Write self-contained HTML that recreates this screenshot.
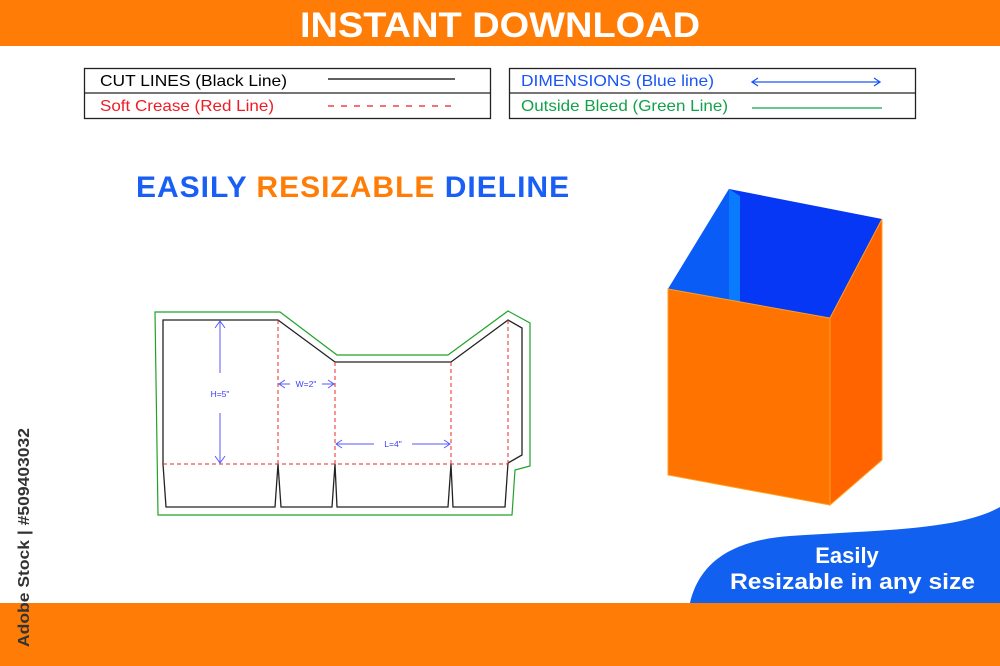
<!DOCTYPE html>
<html><head><meta charset="utf-8"><style>
html,body{margin:0;padding:0;width:1000px;height:666px;overflow:hidden;background:#fff;font-family:"Liberation Sans",sans-serif}
</style></head><body>
<svg width="1000" height="666" viewBox="0 0 1000 666" xmlns="http://www.w3.org/2000/svg" font-family="Liberation Sans, sans-serif">
<rect x="0" y="0" width="1000" height="46" fill="#ff7d06"/>
<text x="300" y="37" font-size="35" font-weight="bold" fill="#fff" textLength="400" lengthAdjust="spacingAndGlyphs">INSTANT DOWNLOAD</text>
<rect x="0" y="603" width="1000" height="63" fill="#ff7d06"/>
<!-- legend -->
<rect x="84.5" y="68.5" width="406" height="50" fill="none" stroke="#222" stroke-width="1.3"/>
<line x1="84" y1="93" x2="491" y2="93" stroke="#222" stroke-width="1.3"/>
<text x="100" y="86" font-size="16" fill="#000" textLength="187" lengthAdjust="spacingAndGlyphs">CUT LINES (Black Line)</text>
<line x1="328" y1="79" x2="455" y2="79" stroke="#000" stroke-width="1.3"/>
<text x="100" y="111" font-size="16" fill="#ee1c25" textLength="174" lengthAdjust="spacingAndGlyphs">Soft Crease (Red Line)</text>
<line x1="328" y1="106" x2="455" y2="106" stroke="#ee1c25" stroke-width="1.3" stroke-dasharray="6 7"/>
<rect x="509.5" y="68.5" width="406" height="50" fill="none" stroke="#222" stroke-width="1.3"/>
<line x1="509" y1="93" x2="916" y2="93" stroke="#222" stroke-width="1.3"/>
<text x="521" y="86" font-size="16" fill="#1a55f5" textLength="193" lengthAdjust="spacingAndGlyphs">DIMENSIONS (Blue line)</text>
<line x1="752" y1="82" x2="880" y2="82" stroke="#1a55f5" stroke-width="1.3"/>
<path d="M758 78 L752 82 L758 86 M874 78 L880 82 L874 86" fill="none" stroke="#1a55f5" stroke-width="1.3"/>
<text x="521" y="111" font-size="16" fill="#12a24a" textLength="207" lengthAdjust="spacingAndGlyphs">Outside Bleed (Green Line)</text>
<line x1="752" y1="108" x2="882" y2="108" stroke="#12a24a" stroke-width="1.3"/>
<!-- heading -->
<text x="136" y="197" font-size="30" font-weight="bold" letter-spacing="1"><tspan fill="#1a5ff5">EASILY </tspan><tspan fill="#ff7d06">RESIZABLE </tspan><tspan fill="#1a5ff5">DIELINE</tspan></text>
<!-- dieline -->
<path d="M155 312 L280 312 L337 355 L448 355 L508 311 L530 323 L530 466 L515 470 L512 515 L158 515 Z" fill="none" stroke="#22a22a" stroke-width="1.2"/>
<path d="M163 320 L278 320 L335 362 L451 362 L508 320 L522 328 L522 455 L508 463 L505 507 L453 507 L451 464 L448 507 L337 507 L335 464 L332 507 L281 507 L278 464 L275 507 L166 507 L163 464 Z" fill="none" stroke="#222" stroke-width="1.3"/>
<g stroke="#ee2a2a" stroke-width="1" stroke-dasharray="4 3" fill="none">
<line x1="278" y1="320" x2="278" y2="464"/><line x1="335" y1="362" x2="335" y2="464"/>
<line x1="451" y1="362" x2="451" y2="464"/><line x1="508" y1="320" x2="508" y2="463"/>
<line x1="163" y1="464" x2="508" y2="464"/></g>
<g stroke="#5a5aff" stroke-width="1" fill="none">
<line x1="220" y1="321" x2="220" y2="373"/><line x1="220" y1="413" x2="220" y2="463"/>
<path d="M215 328 L220 321 L225 328 M215 456 L220 463 L225 456"/>
<line x1="279" y1="384" x2="290" y2="384"/><line x1="322" y1="384" x2="334" y2="384"/>
<path d="M285 380 L279 384 L285 388 M328 380 L334 384 L328 388"/>
<line x1="336" y1="444" x2="374" y2="444"/><line x1="412" y1="444" x2="450" y2="444"/>
<path d="M342 440 L336 444 L342 448 M444 440 L450 444 L444 448"/></g>
<g font-size="8.5" fill="#3a3aff" text-anchor="middle">
<text x="220" y="397">H=5"</text><text x="306" y="387">W=2"</text><text x="393" y="447">L=4"</text></g>
<!-- box -->
<polygon points="729,189 882,219 830,318 668,289" fill="#0537f5"/>
<polygon points="729,189 668,289 729,300" fill="#0a5cf7"/>
<polygon points="729,189 740,196 740,302 729,300" fill="#0a7bff"/>
<polygon points="668,289 830,318 830,505 668,475" fill="#ff7300" stroke="#ffa020" stroke-width="1"/>
<polygon points="830,318 882,219 882,460 830,505" fill="#ff6400" stroke="#ffa020" stroke-width="1"/>
<!-- banner -->
<path d="M690 603 C 700 560 735 540 790 536 C 880 530 960 530 1000 507 L1000 603 Z" fill="#1160f0"/>
<text x="847" y="563" font-size="22" font-weight="bold" fill="#fff" text-anchor="middle">Easily</text>
<text x="730" y="589" font-size="22" font-weight="bold" fill="#fff" textLength="245" lengthAdjust="spacingAndGlyphs">Resizable in any size</text>
<text transform="translate(29,647) rotate(-90)" font-size="16" font-weight="bold" fill="#333" textLength="219" lengthAdjust="spacingAndGlyphs">Adobe Stock | #509403032</text>
</svg>
</body></html>
